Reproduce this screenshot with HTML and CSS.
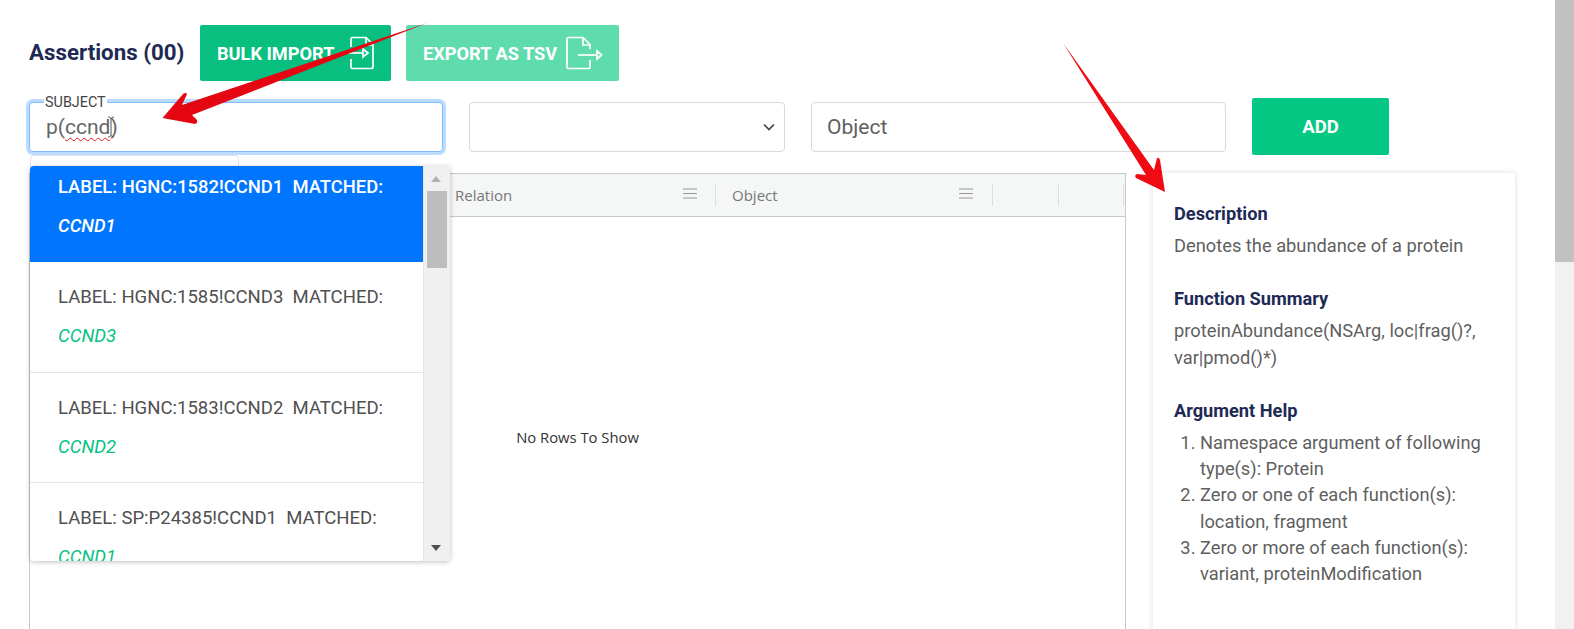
FILE: index.html
```html
<!DOCTYPE html>
<html lang="en">
<head>
<meta charset="utf-8">
<title>Assertions</title>
<link rel="stylesheet" href="styles.css">
</head>
<body>
<div class="page">
  <main class="main">
    <div class="toolbar">
      <h2 class="title">Assertions (00)</h2>
      <button class="btn btn-import">BULK IMPORT
        <svg class="file-icon" width="30" height="34" viewBox="0 0 30 34" fill="none" stroke="#fff" stroke-width="1.700"><path d="M6 11V3a1.500 1.500 0 0 1 1.500-1.500H21l7 7V31a1.500 1.500 0 0 1-1.500 1.500h-19A1.500 1.500 0 0 1 6 31v-8"/><path d="M21 1.500V9h7"/><path d="M1 17h17"/><path d="M18 13l5 4-5 4z"/></svg>
      </button>
      <button class="btn btn-export">EXPORT AS TSV
        <svg class="file-icon" width="38" height="34" viewBox="0 0 38 34" fill="none" stroke="#fff" stroke-width="1.700"><path d="M25 24v7a1.500 1.500 0 0 1-1.500 1.500h-20A1.500 1.500 0 0 1 2 31V3a1.500 1.500 0 0 1 1.500-1.500H18l7 7V13"/><path d="M18 1.500V9h7"/><path d="M13 19h19"/><path d="M32 15l4.500 4-4.500 4z"/></svg>
      </button>
    </div>

    <div class="form-row">
      <div class="field field-subject">
        <span class="float-label">SUBJECT</span>
        <span class="field-text">p(<span class="misspelt">ccnd</span>)</span>
        <svg class="ibeam" width="8" height="22" viewBox="0 0 8 22" fill="none" stroke="#555" stroke-width="1"><path d="M1 1c2 0 3 1 3 2v16c0 1-1 2-3 2M7 1C5 1 4 2 4 3M4 19c0 1 1 2 3 2"/></svg>
      </div>
      <div class="field field-select">
        <svg width="12" height="8" viewBox="0 0 12 8" fill="none" stroke="#444" stroke-width="1.700"><path d="M1 1.500L6 6.500l5-5"/></svg>
      </div>
      <div class="field field-object"><span class="placeholder">Object</span></div>
      <button class="btn btn-add">ADD</button>
    </div>

    <div class="content">
      <section class="table">
        <div class="thead">
          <div class="th th-spacer"></div>
          <div class="th th-relation"><span>Relation</span>
            <svg class="menu" width="14" height="11" viewBox="0 0 14 11" stroke="#9a9a9a" stroke-width="1.100"><path d="M0 1h14M0 5.500h14M0 10h14"/></svg>
          </div>
          <div class="th th-object"><span>Object</span>
            <svg class="menu" width="14" height="11" viewBox="0 0 14 11" stroke="#9a9a9a" stroke-width="1.100"><path d="M0 1h14M0 5.500h14M0 10h14"/></svg>
          </div>
          <div class="th th-blank"></div>
          <div class="th th-blank-end"></div>
        </div>
        <div class="tbody">No Rows To Show</div>
      </section>

      <aside class="help">
        <h3>Description</h3>
        <p>Denotes the abundance of a protein</p>
        <h3>Function Summary</h3>
        <p>proteinAbundance(NSArg, loc|frag()?, var|pmod()*)</p>
        <h3>Argument Help</h3>
        <ol>
          <li>Namespace argument of following type(s): Protein</li>
          <li>Zero or one of each function(s): location, fragment</li>
          <li>Zero or more of each function(s): variant, proteinModification</li>
        </ol>
      </aside>
    </div>

    <div class="menu-tab"></div>
    <div class="dropdown">
      <ul class="options">
        <li class="option active">LABEL: HGNC:1582!CCND1&nbsp; MATCHED:<em>CCND1</em></li>
        <li class="option">LABEL: HGNC:1585!CCND3&nbsp; MATCHED:<em>CCND3</em></li>
        <li class="option">LABEL: HGNC:1583!CCND2&nbsp; MATCHED:<em>CCND2</em></li>
        <li class="option">LABEL: SP:P24385!CCND1&nbsp; MATCHED:<em>CCND1</em></li>
      </ul>
      <div class="dd-scroll">
        <span class="arrow-up"></span>
        <span class="dd-thumb"></span>
        <span class="arrow-down"></span>
      </div>
    </div>

    <svg class="annotations" width="1555" height="629" viewBox="0 0 1555 629">
      <path d="M427 23L182 105L187 94Q186 92 183 94L162.500 118L195 124Q198 123 197 120L192 115Z" fill="#e40712"/>
      <path d="M1063 43L1154 170L1157 158Q1159 157 1160 160L1165 192L1136 178Q1134 175 1137 174L1146 175Z" fill="#f00a14"/>
    </svg>
  </main>
  <div class="page-scroll"><div class="page-thumb"></div></div>
</div>
</body>
</html>
```

FILE: styles.css
```css
* { box-sizing: border-box; }
html, body { margin: 0; height: 100%; overflow: hidden; background: #fff; }
body { font-family: Roboto, "Liberation Sans", sans-serif; color: #555; }

.page { display: flex; height: 629px; overflow: hidden; }
.main { position: relative; flex: 1; min-width: 0; padding: 25px 0 0 29px; }

.page-scroll { width: 19px; background: #f1f1f1; }
.page-thumb { height: 262px; background: #c1c1c1; }

/* toolbar */
.toolbar { display: flex; align-items: center; height: 56px; }
.title { margin: -2px 16px 0 0; width: 155px; font-size: 22.300px; font-weight: 700; color: #1e2a55; white-space: nowrap; }
.btn { display: flex; align-items: center; justify-content: center; border: 0; border-radius: 2px; color: #fff; font: 700 18.200px Roboto, sans-serif; white-space: nowrap; padding: 0; }
.btn-import { width: 191px; height: 56px; background: #08bf7f; justify-content: flex-start; padding-left: 17px; }
.btn-export { width: 213px; height: 56px; margin-left: 15px; background: #5fdcae; justify-content: flex-start; padding-left: 17px; }
.file-icon { margin-left: 8px; flex: none; }
.btn-import .file-icon { margin-left: 11px; }

/* form row */
.form-row { display: flex; align-items: center; height: 57px; margin-top: 17px; }
.field { height: 50px; background: #fff; border: 1px solid #d9d9d9; border-radius: 4px; display: flex; align-items: center; font-size: 21px; color: #666; }
.field-subject { position: relative; width: 414px; padding-left: 16px; border-color: #80bdff; box-shadow: 0 0 0 3px #bcdcff; }
.float-label { position: absolute; left: 14px; top: -8px; padding: 0 1px; background: #fff; font-size: 14.400px; line-height: 16px; color: #444; }
.misspelt { text-decoration: underline wavy #e0141e 1px; text-underline-offset: 3px; text-decoration-skip-ink: none; }
.ibeam { position: absolute; left: 77px; top: 13px; }
.field-select { width: 316px; margin-left: 26px; justify-content: flex-end; padding-right: 9px; }
.field-object { width: 415px; margin-left: 26px; padding-left: 15px; }
.placeholder { color: #5f5f5f; }
.btn-add { width: 137px; height: 57px; margin-left: 26px; background: #04c784; font-size: 18.500px; }

/* content */
.content { display: flex; align-items: flex-start; margin-top: 18px; }
.table { width: 1097px; border: 1px solid #c8c8c8; flex: none; }
.thead { display: flex; height: 43px; background: #f5f7f7; border-bottom: 1px solid #c8c8c8; font: 15px "Open Sans", "Noto Sans", sans-serif; color: #767676; align-items: center; }
.th { height: 22px; display: flex; align-items: center; justify-content: space-between; border-right: 1px solid #dcdfdf; }
.th-spacer { width: 425px; border-right: 0; }
.th-relation { width: 261px; padding-right: 18px; }
.th-object { width: 277px; padding: 0 19px 0 16px; }
.th-blank { width: 66px; }
.th-blank-end { width: 65px; }
.menu { flex: none; margin-top: -3px; }
.tbody { height: 440px; display: flex; align-items: center; justify-content: center; font: 14.800px "Open Sans", "Noto Sans", sans-serif; color: #333; }

.help { width: 362px; height: 520px; margin-left: 27px; flex: none; padding: 31px 21px 0; border-radius: 2px; box-shadow: 0 0 6px rgba(0, 0, 0, .14); font-size: 18.300px; line-height: 26.300px; color: #5f5f5f; }
.help h3 { margin: 0; font-size: 18.200px; font-weight: 700; line-height: 20px; color: #1e2a55; }
.help p { margin: 9px 0 30px; }
.help ol { margin: 9px 0 0; padding-left: 26px; }

/* autocomplete */
.menu-tab { position: absolute; left: 30px; top: 155px; width: 209px; height: 14px; border: 1px solid #e3e3e3; border-radius: 4px 4px 0 0; background: #fff; }
.dropdown { position: absolute; left: 30px; top: 166px; width: 420px; height: 395px; display: flex; border-radius: 4px; background: #fff; box-shadow: 0 1px 5px rgba(0, 0, 0, .25); overflow: hidden; }
.options { list-style: none; margin: 0; padding: 0; width: 394px; flex: none; overflow: hidden; border-right: 1px solid #e4e4e4; font-size: 18.550px; line-height: 39px; color: #505050; }
.option { padding: 16px 0 0 28px; height: 110.500px; border-bottom: 1px solid #e4e4e4; white-space: nowrap; }
.option em { display: block; color: #07c283; font-style: italic; }
.option.active { height: 96px; padding-top: 1px; background: #0076ff; border-bottom: 0; color: #fff; font-weight: 500; font-size: 18.400px; }
.option.active em { color: #fff; }

.dd-scroll { flex: 1; position: relative; background: #f0f0f0; }
.dd-thumb { position: absolute; left: 3px; top: 25px; width: 20px; height: 77px; background: #bdbdbd; }
.arrow-up, .arrow-down { position: absolute; left: 7px; width: 0; height: 0; border-left: 5px solid transparent; border-right: 5px solid transparent; }
.arrow-up { top: 10px; border-bottom: 6px solid #b0b0b0; }
.arrow-down { bottom: 10px; border-top: 6px solid #505050; }

.annotations { position: absolute; left: 0; top: 0; pointer-events: none; }
```
